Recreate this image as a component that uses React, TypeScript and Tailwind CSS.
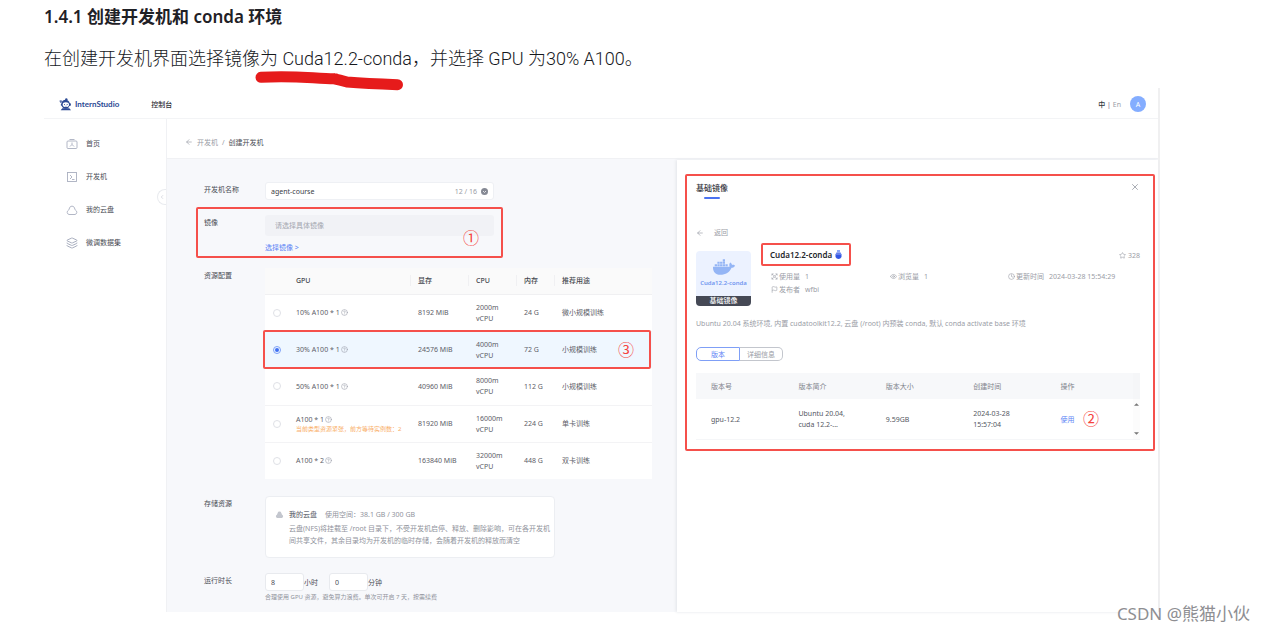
import type { ReactNode } from "react";
import { ArrowLeft, ChevronLeft, CircleHelp, Clock, Eye, Flag, Layers, Star, X } from "lucide-react";
import { FaDocker } from "react-icons/fa";

type Gpu = { name: string; mem: string; cpu: string; ram: string; use: string; note?: string };

const GPUS: Gpu[] = [
  { name: "10% A100 * 1", mem: "8192 MiB", cpu: "2000m", ram: "24 G", use: "微小规模训练" },
  { name: "30% A100 * 1", mem: "24576 MiB", cpu: "4000m", ram: "72 G", use: "小规模训练" },
  { name: "50% A100 * 1", mem: "40960 MiB", cpu: "8000m", ram: "112 G", use: "小规模训练" },
  {
    name: "A100 * 1",
    mem: "81920 MiB",
    cpu: "16000m",
    ram: "224 G",
    use: "单卡训练",
    note: "当前类型资源紧张，前方等待实例数：2",
  },
  { name: "A100 * 2", mem: "163840 MiB", cpu: "32000m", ram: "448 G", use: "双卡训练" },
];

function HomeIcon() {
  return (
    <svg viewBox="0 0 24 24" className="size-3" fill="none" stroke="currentColor" strokeWidth="1.800">
      <path d="M7 3h10" />
      <rect x="2" y="6" width="20" height="15" rx="2" />
      <path d="M12 9v4M12 13l-4 4M12 13l4 4" />
    </svg>
  );
}

function DevIcon() {
  return (
    <svg viewBox="0 0 24 24" className="size-3" fill="none" stroke="currentColor" strokeWidth="1.800">
      <rect x="3" y="3" width="18" height="18" />
      <path d="M8 8l4 4-4 4M12 17h5" />
    </svg>
  );
}

function CloudIcon() {
  return (
    <svg viewBox="0 0 24 24" className="size-3" fill="none" stroke="currentColor" strokeWidth="1.800">
      <path d="M6 21a4.500 4.500 0 0 1-1-8.500C6 11 6.500 10 7 8a5.200 5.200 0 0 1 10 0c.5 2 1 3 2 4.500A4.500 4.500 0 0 1 18 21z" />
    </svg>
  );
}

function UsageIcon() {
  return (
    <svg viewBox="0 0 24 24" className="size-[7px]" fill="none" stroke="currentColor" strokeWidth="2">
      <path d="M3 3l6 6M21 3l-6 6M3 21l6-6M21 21l-6-6M3 9V3h6M15 3h6v6M3 15v6h6M15 21h6v-6" />
      <circle cx="12" cy="12" r="3" />
    </svg>
  );
}

function Logo() {
  return (
    <svg viewBox="0 0 39 39" className="size-[13px]" fill="#2c4a94">
      <path d="M8 14C9 8 14 5 20 5s11 4 12 10l4 2-1 6-4 1c-1 5-5 8-11 8S10 29 8 24l-3-3z" />
      <circle cx="22" cy="4" r="3.500" />
      <path d="M1 8l6-2 3 7-6 2z" opacity=".75" />
      <ellipse cx="20.500" cy="20" rx="9.500" ry="7" fill="#fff" />
      <circle cx="16.500" cy="19.500" r="1.600" />
      <circle cx="24.500" cy="19.500" r="1.600" />
      <path d="M17 24q3.500 2 7 0" stroke="#2c4a94" strokeWidth="1.200" fill="none" />
      <path d="M5 37l5-6h21l5 6z" />
    </svg>
  );
}

function Mark({ children, className }: { children: ReactNode; className: string }) {
  return <span className={`absolute text-[16px] leading-4 text-[#f5433d] ${className}`}>{children}</span>;
}

function Sidebar() {
  const items = [
    { label: "首页", icon: <HomeIcon /> },
    { label: "开发机", icon: <DevIcon /> },
    { label: "我的云盘", icon: <CloudIcon /> },
    { label: "微调数据集", icon: <Layers className="size-3" /> },
  ];
  return (
    <nav className="relative w-[123px] shrink-0 border-r border-[#f0f1f4] pt-2">
      {items.map((it) => (
        <a key={it.label} href="#" className="flex h-[33px] items-center gap-2 pl-[22px] text-[#a9afbf]">
          {it.icon}
          <span className="text-[#4a4d55]">{it.label}</span>
        </a>
      ))}
      <button
        aria-label="收起"
        className="absolute top-[70px] right-0 flex h-4 w-[9px] items-center justify-center rounded-l-full border border-r-0 border-[#e9ebef] text-[#b9bdc8]"
      >
        <ChevronLeft className="size-[6px]" />
      </button>
    </nav>
  );
}

function GpuTable() {
  const heads = ["显存", "CPU", "内存", "推荐用途"];
  return (
    <div className="relative w-[387px]">
      <table className="w-full table-fixed bg-white text-left text-[#5d6068]">
        <colgroup>
          <col className="w-[23px]" />
          <col className="w-[122px]" />
          <col className="w-[58px]" />
          <col className="w-[48px]" />
          <col className="w-[38px]" />
          <col />
        </colgroup>
        <thead>
          <tr className="h-[26px] border-b border-[#f0f0f2] bg-[#fafafa] text-[#44474e]">
            <th></th>
            <th className="pl-2 font-medium">GPU</th>
            {heads.map((h) => (
              <th key={h} className="font-medium">
                <div className="border-l border-[#f0f0f2] pl-[7px] whitespace-nowrap">{h}</div>
              </th>
            ))}
          </tr>
        </thead>
        <tbody>
          {GPUS.map((g, i) => (
            <tr
              key={g.mem}
              className={i === 1 ? "h-[37px] bg-[#eff7ff]" : "h-[37px] border-b border-[#f3f3f5] last:border-0"}
            >
              <td className="pl-2">
                <input
                  type="radio"
                  name="gpu"
                  id={`gpu-${i}`}
                  defaultChecked={i === 1}
                  className="block size-2 appearance-none rounded-full border border-[#dfe1e6] bg-white checked:border-[#7fa2f8] checked:bg-[#3f6ff2] checked:bg-clip-content checked:p-px"
                />
              </td>
              <td className="pl-2 whitespace-nowrap">
                <label htmlFor={`gpu-${i}`} className="flex items-center gap-px">
                  {g.name}
                  <CircleHelp className="size-[7px] text-[#9b9fab]" />
                </label>
                {g.note && <p className="text-[6px] leading-2 text-[#f9ae68]">{g.note}</p>}
              </td>
              <td className="pl-2 whitespace-nowrap">{g.mem}</td>
              <td className="pl-2">
                {g.cpu}
                <br />
                vCPU
              </td>
              <td className="pl-2 whitespace-nowrap">{g.ram}</td>
              <td className="pl-2">{g.use}</td>
            </tr>
          ))}
        </tbody>
      </table>
      <div className="absolute top-[62px] right-px -left-[2px] h-[39px] rounded-[2px] border-2 border-[#f5504b]">
        <Mark className="top-[10px] right-[15px]">③</Mark>
      </div>
    </div>
  );
}

function CreateForm() {
  return (
    <form className="min-w-0 flex-1 pl-[29px] pt-[22px]">
      <div className="flex pl-2">
        <label htmlFor="name" className="w-[61px] leading-4 text-[#4a4d55]">
          开发机名称
        </label>
        <div className="flex h-[18px] w-[229px] items-center rounded-[3px] border border-[#eef0f4] bg-white px-[5px]">
          <input id="name" defaultValue="agent-course" className="min-w-0 flex-1 text-[#3a3d45] outline-none" />
          <span className="mr-1 text-[#9a9da6]">12 / 16</span>
          <svg viewBox="0 0 14 14" className="size-[7px]">
            <circle cx="7" cy="7" r="7" fill="#858994" />
            <path d="M4 6l3 3 3-3" stroke="#fff" strokeWidth="1.500" fill="none" />
          </svg>
        </div>
      </div>

      <div className="relative mt-[7px] flex h-[51px] w-[307px] rounded-[2px] border-2 border-[#f5504b] pt-[6px] pl-[6px]">
        <label htmlFor="image" className="w-[61px] leading-4 text-[#4a4d55]">
          镜像
        </label>
        <div>
          <input
            id="image"
            placeholder="请选择具体镜像"
            className="block h-[21px] w-[229px] rounded-[3px] bg-[#f1f2f6] px-[10px] placeholder:text-[#a4a7b0]"
            disabled
          />
          <a href="#" className="mt-[6px] block text-[#5c84f5]">
            选择镜像 &gt;
          </a>
        </div>
        <Mark className="top-[21px] right-[22px]">①</Mark>
      </div>

      <div className="mt-[10px] flex pl-2">
        <span className="w-[61px] leading-4 text-[#4a4d55]">资源配置</span>
        <GpuTable />
      </div>

      <div className="mt-[17px] flex pl-2">
        <span className="w-[61px] leading-4 text-[#4a4d55]">存储资源</span>
        <div className="h-[62px] w-[290px] rounded-[4px] border border-[#eceef2] bg-white pt-3 pl-[9px] text-[#90939c]">
          <div className="flex items-center">
            <svg viewBox="0 0 24 24" className="size-[9px]" fill="#c3c6ce">
              <path d="M6 21a4.500 4.500 0 0 1-1-8.500C6 11 6.500 10 7 8a5.200 5.200 0 0 1 10 0c.5 2 1 3 2 4.500A4.500 4.500 0 0 1 18 21z" />
            </svg>
            <span className="ml-[5px] font-medium text-[#6d7079]">我的云盘</span>
            <span className="ml-2">使用空间：38.1 GB / 300 GB</span>
          </div>
          <p className="mt-[3px] pl-[14px] leading-3 whitespace-nowrap">
            云盘(NFS)将挂载至 /root 目录下，不受开发机启停、释放、删除影响，可在各开发机
            <br />
            间共享文件，其余目录均为开发机的临时存储，会随着开发机的释放而清空
          </p>
        </div>
      </div>

      <div className="mt-[15px] flex pl-2">
        <span className="w-[61px] leading-4 text-[#4a4d55]">运行时长</span>
        <div>
          <div className="flex items-center text-[#4a4d55]">
            <input
              id="hours"
              defaultValue="8"
              className="h-[18px] w-[39px] rounded-[3px] border border-[#e8eaee] bg-white px-[5px]"
            />
            <label htmlFor="hours">小时</label>
            <input
              id="minutes"
              defaultValue="0"
              className="ml-[11px] h-[18px] w-[39px] rounded-[3px] border border-[#e8eaee] bg-white px-[5px]"
            />
            <label htmlFor="minutes">分钟</label>
          </div>
          <p className="mt-px text-[6px] text-[#90939c]">合理使用 GPU 资源，避免算力浪费。单次可开启 7 天，按需续费</p>
        </div>
      </div>
    </form>
  );
}

function ImageDrawer() {
  const heads = ["版本号", "版本简介", "版本大小", "创建时间", "操作"];
  return (
    <aside className="w-[481px] shrink-0 bg-white pt-[14px] pr-[3px] pl-2 shadow-[-1px_0_3px_#e3e5e9]">
      <div className="relative h-[277px] rounded-[2px] border-2 border-[#f5504b] pt-[6px] pr-[13px] pl-[9px] text-[#9a9da6]">
        <div className="flex items-start justify-between">
          <div>
            <h2 className="text-[8px] leading-[12px] font-medium text-[#33363d]">基础镜像</h2>
            <div className="mx-2 mt-[3px] h-[2px] rounded-full bg-[#4a72f0]" />
          </div>
          <button aria-label="关闭">
            <X className="size-[10px]" />
          </button>
        </div>

        <button className="mt-7 flex items-center gap-[10px]">
          <ArrowLeft className="size-2" />
          返回
        </button>

        <div className="mt-[3px] flex">
          <div className="mt-[10px] flex h-[55px] w-[55px] flex-col items-center overflow-hidden rounded-[4px] bg-[#ecf2ff]">
            <FaDocker className="mt-[5px] size-[22px] shrink-0 text-[#94b5f5]" />
            <span className="text-[6px] leading-[10px] font-semibold text-[#6f94ef]">Cuda12.2-conda</span>
            <span className="mt-auto w-full bg-[#454955] text-center leading-[10px] font-medium text-white">基础镜像</span>
          </div>
          <div className="flex-1 pl-[10px]">
            <div className="flex items-center justify-between">
              <h3 className="mt-[2px] flex h-[23px] items-center gap-[3px] rounded-[2px] border-2 border-[#f5504b] px-[7px] text-[8px] font-semibold text-[#24262b]">
                Cuda12.2-conda
                <svg viewBox="0 0 14 18" className="h-[9px] w-[7px]">
                  <path d="M4 0h6v4H4z" fill="#8aa5f7" />
                  <path d="M3 5h8l2 4v5q-2 4-6 4t-6-4V9z" fill="#3457e4" />
                  <path d="M2 8h10" stroke="#b4c4fa" strokeWidth="1.500" />
                </svg>
              </h3>
              <span className="flex items-center gap-[2px] pt-1">
                <Star className="size-[7px]" />
                328
              </span>
            </div>
            <div className="mt-1 grid grid-cols-[119px_118px_1fr] pl-[10px] leading-[13px]">
              <span className="flex items-center gap-px">
                <UsageIcon />
                使用量<span className="ml-1">1</span>
              </span>
              <span className="flex items-center gap-px">
                <Eye className="size-[7px]" />
                浏览量<span className="ml-1">1</span>
              </span>
              <span className="flex items-center gap-px whitespace-nowrap">
                <Clock className="size-[7px]" />
                更新时间<span className="ml-1">2024-03-28 15:54:29</span>
              </span>
              <span className="flex items-center gap-px">
                <Flag className="size-[7px]" />
                发布者<span className="ml-1">wfbi</span>
              </span>
            </div>
          </div>
        </div>

        <p className="mt-3 whitespace-nowrap">
          Ubuntu 20.04 系统环境, 内置 cudatoolkit12.2, 云盘 (/root) 内预装 conda, 默认 conda activate base 环境
        </p>

        <div className="mt-[18px] flex h-[14px]">
          <button className="w-[44px] rounded-l-[5px] border border-[#7f9ff6] text-[#5c84f5]">版本</button>
          <button className="w-[43px] rounded-r-[5px] border border-l-0 border-[#c3c6cd]">详细信息</button>
        </div>

        <div className="mt-3 flex border-b border-[#f5f6f8]">
          <table className="flex-1 table-fixed text-left">
            <thead>
              <tr className="h-[26px] bg-[#f7f8fa] text-[#80838c]">
                {heads.map((h) => (
                  <th key={h} className="w-1/5 pl-[15px] font-normal">
                    {h}
                  </th>
                ))}
              </tr>
            </thead>
            <tbody>
              <tr className="h-[40px] text-[#54575f]">
                <td className="pl-[15px]">gpu-12.2</td>
                <td className="pl-[15px]">
                  Ubuntu 20.04,
                  <br />
                  cuda 12.2-...
                </td>
                <td className="pl-[15px]">9.59GB</td>
                <td className="pl-[15px]">
                  2024-03-28
                  <br />
                  15:57:04
                </td>
                <td className="pl-[15px]">
                  <a href="#" className="text-[#5c84f5]">
                    使用
                  </a>
                </td>
              </tr>
            </tbody>
          </table>
          <div className="flex w-[7px] flex-col items-center justify-between border-t-[26px] border-[#f5f6f8] bg-[#fcfcfc] py-1">
            <svg viewBox="0 0 4 2" className="h-[3px] w-[5px]" fill="#777">
              <path d="M0 2h4L2 0z" />
            </svg>
            <svg viewBox="0 0 4 2" className="h-[3px] w-[5px]" fill="#777">
              <path d="M0 0h4L2 2z" />
            </svg>
          </div>
        </div>
        <Mark className="right-[54px] bottom-[22px]">②</Mark>
      </div>
    </aside>
  );
}

function Console() {
  return (
    <section className="border-r-2 border-[#f0f0f1] text-[7px] leading-[11px]">
      <header className="flex h-[31px] items-center border-b border-[#f3f4f6] pt-[2px] pr-3 pl-[15px]">
        <Logo />
        <span className="ml-[3px] font-['Lato',sans-serif] text-[8px] font-bold text-[#2c4a94]">InternStudio</span>
        <span className="ml-8 font-medium text-[#2b2d33]">控制台</span>
        <span className="ml-auto text-[#9a9da6]">
          <b className="font-medium text-[#33363d]">中</b> <span className="text-[#755a78]">|</span> En
        </span>
        <span className="ml-[9px] flex size-4 items-center justify-center rounded-full bg-[#84adff] text-white">A</span>
      </header>
      <div className="flex">
        <Sidebar />
        <main className="min-w-0 flex-1">
          <div className="flex h-10 items-center gap-1 border-b border-[#f0f1f4] pt-[7px] pl-[18px] text-[#9a9da6]">
            <ArrowLeft className="size-2" />
            <a href="#">开发机</a>
            <span>/</span>
            <span className="text-[#4a4d55]">创建开发机</span>
          </div>
          <div className="flex bg-[#f7f8fb] pt-px">
            <div className="min-w-0 flex-1 pb-[9px]">
              <CreateForm />
            </div>
            <ImageDrawer />
          </div>
        </main>
      </div>
    </section>
  );
}

export default function App() {
  return (
    <div className="relative min-h-screen bg-white pt-[5px] pr-[106px] pb-5 pl-[44px] font-['Noto_Sans','Noto_Sans_CJK_SC',sans-serif]">
      <h1 className="text-[17px] leading-6 font-semibold text-[#1f2126]">1.4.1 创建开发机和 conda 环境</h1>
      <div className="relative mt-[15px] mb-[14px]">
        <p className="font-['Roboto','Noto_Sans_CJK_SC',sans-serif] text-[18px] leading-[30px] font-light text-[#16181d]">
          在创建开发机界面选择镜像为 Cuda12.2-conda，并选择 GPU 为30% A100。
        </p>
        <svg
          viewBox="0 0 150 22"
          className="absolute top-[26px] left-[210px] h-[22px] w-[150px]"
          fill="none"
          stroke="#e61b1b"
          strokeWidth="11"
          strokeLinecap="round"
          strokeLinejoin="round"
        >
          <path d="M7 7.300Q28 6 59 7.700T79 8.700Q86 10 93 12Q112 13.500 143.500 14.700" />
        </svg>
      </div>
      <Console />
      <p className="absolute right-4 bottom-1 text-[17px] leading-7 text-[#8e8e92]">CSDN @熊猫小伙</p>
    </div>
  );
}
